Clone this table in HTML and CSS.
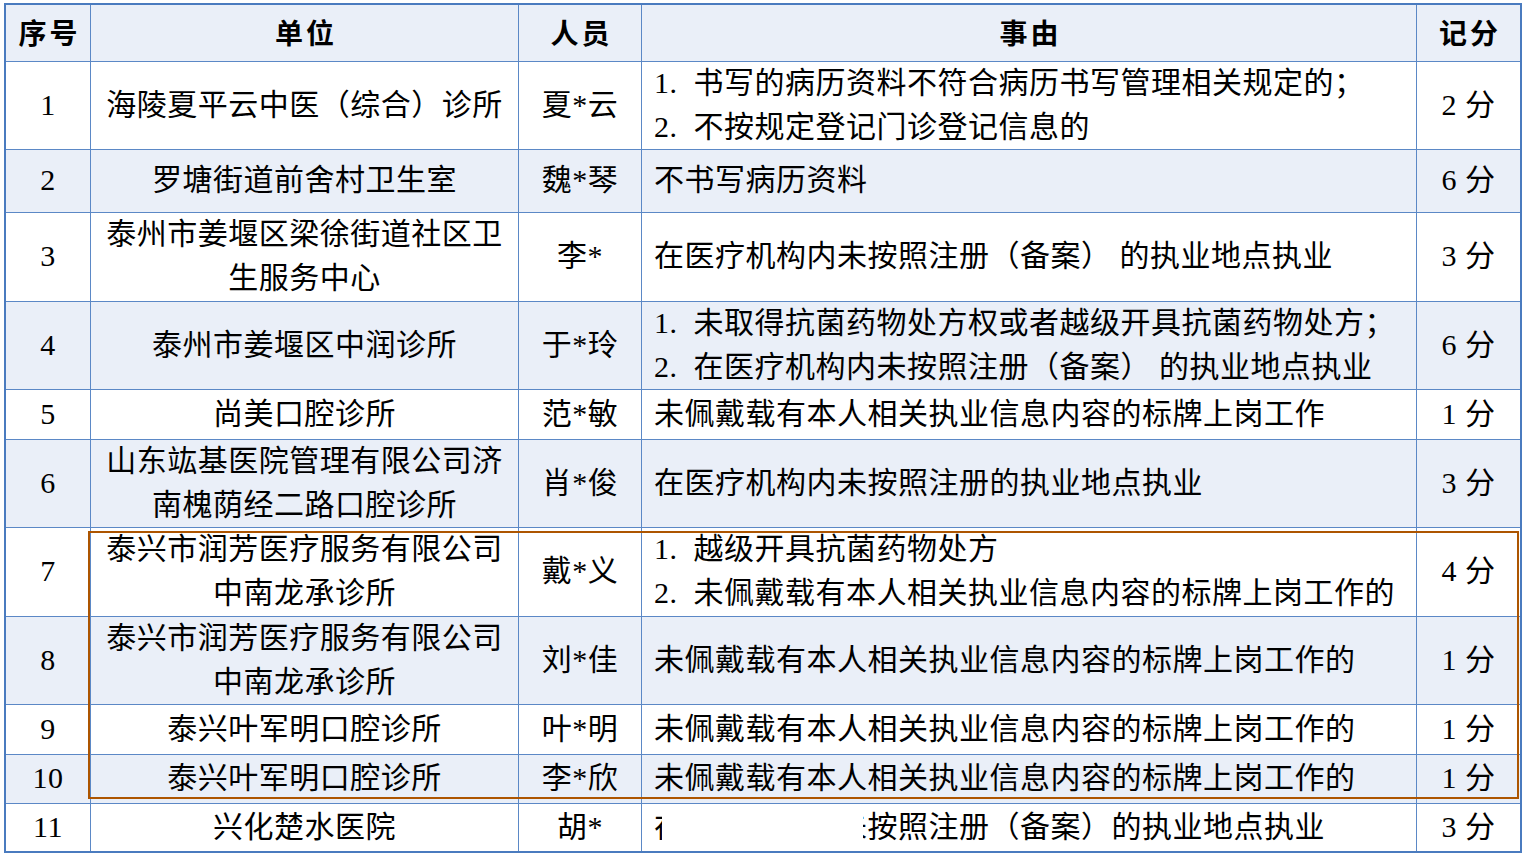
FILE: index.html
```html
<!DOCTYPE html>
<html lang="zh-CN">
<head>
<meta charset="utf-8">
<title>记分表</title>
<link rel="stylesheet" href="styles.css">
</head>
<body>
<div class="tbl">
  <div class="row head h57">
    <div class="c">序号</div>
    <div class="c">单位</div>
    <div class="c">人员</div>
    <div class="c">事由</div>
    <div class="c">记分</div>
  </div>
  <div class="row h88">
    <div class="c num">1</div>
    <div class="c">海陵夏平云中医（综合）诊所</div>
    <div class="c">夏*云</div>
    <div class="c why">1.&nbsp;&nbsp;书写的病历资料不符合病历书写管理相关规定的；<br>2.&nbsp;&nbsp;不按规定登记门诊登记信息的</div>
    <div class="c">2 分</div>
  </div>
  <div class="row band h63">
    <div class="c num">2</div>
    <div class="c">罗塘街道前舍村卫生室</div>
    <div class="c">魏*琴</div>
    <div class="c why">不书写病历资料</div>
    <div class="c">6 分</div>
  </div>
  <div class="row h89">
    <div class="c num">3</div>
    <div class="c">泰州市姜堰区梁徐街道社区卫<br>生服务中心</div>
    <div class="c">李*</div>
    <div class="c why">在医疗机构内未按照注册（备案） 的执业地点执业</div>
    <div class="c">3 分</div>
  </div>
  <div class="row band h88">
    <div class="c num">4</div>
    <div class="c">泰州市姜堰区中润诊所</div>
    <div class="c">于*玲</div>
    <div class="c why">1.&nbsp;&nbsp;未取得抗菌药物处方权或者越级开具抗菌药物处方；<br>2.&nbsp;&nbsp;在医疗机构内未按照注册（备案） 的执业地点执业</div>
    <div class="c">6 分</div>
  </div>
  <div class="row h50">
    <div class="c num">5</div>
    <div class="c">尚美口腔诊所</div>
    <div class="c">范*敏</div>
    <div class="c why">未佩戴载有本人相关执业信息内容的标牌上岗工作</div>
    <div class="c">1 分</div>
  </div>
  <div class="row band h88">
    <div class="c num">6</div>
    <div class="c">山东竑基医院管理有限公司济<br>南槐荫经二路口腔诊所</div>
    <div class="c">肖*俊</div>
    <div class="c why">在医疗机构内未按照注册的执业地点执业</div>
    <div class="c">3 分</div>
  </div>
  <div class="row h89">
    <div class="c num">7</div>
    <div class="c">泰兴市润芳医疗服务有限公司<br>中南龙承诊所</div>
    <div class="c">戴*义</div>
    <div class="c why">1.&nbsp;&nbsp;越级开具抗菌药物处方<br>2.&nbsp;&nbsp;未佩戴载有本人相关执业信息内容的标牌上岗工作的</div>
    <div class="c">4 分</div>
  </div>
  <div class="row band h88">
    <div class="c num">8</div>
    <div class="c">泰兴市润芳医疗服务有限公司<br>中南龙承诊所</div>
    <div class="c">刘*佳</div>
    <div class="c why">未佩戴载有本人相关执业信息内容的标牌上岗工作的</div>
    <div class="c">1 分</div>
  </div>
  <div class="row h50">
    <div class="c num">9</div>
    <div class="c">泰兴叶军明口腔诊所</div>
    <div class="c">叶*明</div>
    <div class="c why">未佩戴载有本人相关执业信息内容的标牌上岗工作的</div>
    <div class="c">1 分</div>
  </div>
  <div class="row band h49">
    <div class="c num">10</div>
    <div class="c">泰兴叶军明口腔诊所</div>
    <div class="c">李*欣</div>
    <div class="c why">未佩戴载有本人相关执业信息内容的标牌上岗工作的</div>
    <div class="c">1 分</div>
  </div>
  <div class="row last h47">
    <div class="c num">11</div>
    <div class="c">兴化楚水医院</div>
    <div class="c">胡*</div>
    <div class="c why redact">在医疗机构内未按照注册（备案）的执业地点执业<span class="patch"></span></div>
    <div class="c">3 分</div>
  </div>
  <div class="box"></div>
</div>
</body>
</html>
```

FILE: styles.css
```css
html, body {
  margin: 0;
  padding: 0;
  background: #ffffff;
}

.tbl {
  position: relative;
  box-sizing: border-box;
  width: 1518px;
  margin: 3px 0 0 4px;
  border: 2px solid #4a7bbf;
  display: flex;
  flex-direction: column;
  font-family: "Liberation Serif", "Noto Sans CJK SC", serif;
  font-size: 30px;
  letter-spacing: 0.5px;
  color: #000;
}

.row {
  box-sizing: border-box;
  display: grid;
  grid-template-columns: 85px 428px 123px 775px 1fr;
  border-bottom: 1px solid #5b88c6;
  background: #ffffff;
}

.row.last { border-bottom: none; }
.row.band, .row.head { background: #eaeff8; }

.h57 { height: 57px; }
.h88 { height: 88px; }
.h63 { height: 63px; }
.h89 { height: 89px; }
.h50 { height: 50px; }
.h49 { height: 49px; }
.h47 { height: 47px; }

.c {
  box-sizing: border-box;
  border-right: 1px solid #5b88c6;
  display: flex;
  align-items: center;
  justify-content: center;
  text-align: center;
  line-height: 44px;
  padding-bottom: 2px;
  white-space: nowrap;
  overflow: hidden;
}

.c:last-child { border-right: none; }

.head .c {
  font-family: "Noto Sans CJK SC", sans-serif;
  font-weight: 700;
  font-size: 28px;
  letter-spacing: 3px;
  padding-left: 3px;
}

.why {
  justify-content: flex-start;
  text-align: left;
  padding-left: 12px;
}

.redact { position: relative; }

.patch {
  position: absolute;
  left: 20px;
  top: 2px;
  width: 201px;
  bottom: 0;
  background: #ffffff;
}

.box {
  position: absolute;
  box-sizing: border-box;
  left: 82px;
  top: 526px;
  width: 1431px;
  height: 268px;
  border: 2px solid #ad5500;
  pointer-events: none;
}
```
